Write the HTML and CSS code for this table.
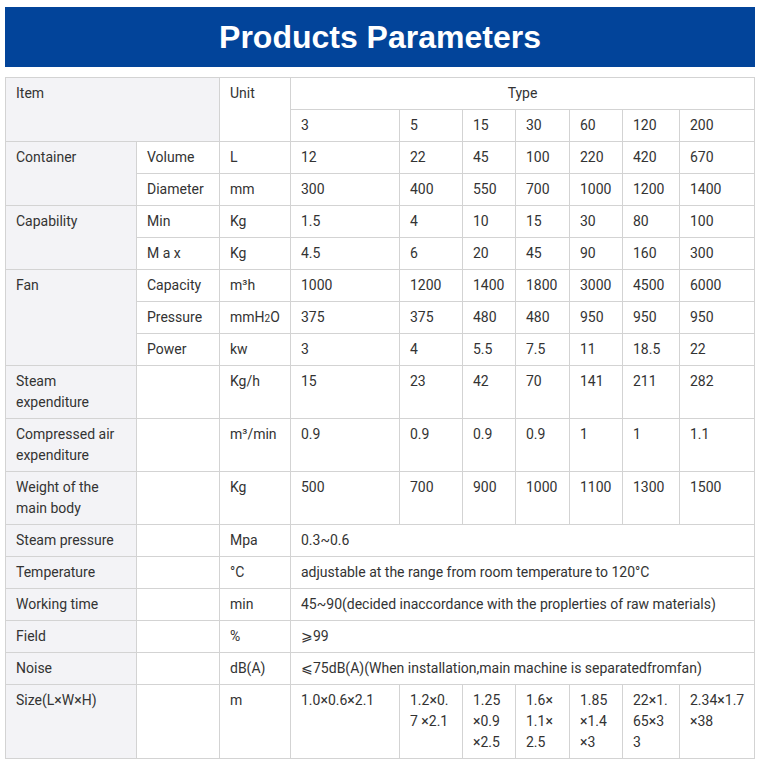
FILE: index.html
```html
<!DOCTYPE html>
<html lang="en">
<head>
<meta charset="utf-8">
<title>Products Parameters</title>
<link rel="stylesheet" href="styles.css">
</head>
<body>
<div class="page">
  <h1 class="banner">Products Parameters</h1>
  <table class="params">
    <colgroup>
      <col class="c1"><col class="c2"><col class="c3"><col class="c4"><col class="c5"><col class="c6"><col class="c7"><col class="c8"><col class="c9"><col class="c10">
    </colgroup>
    <tbody>
      <tr><td class="head" colspan="2" rowspan="2">Item</td><td rowspan="2">Unit</td><td colspan="7" class="center">Type</td></tr>
      <tr><td>3</td><td>5</td><td>15</td><td>30</td><td>60</td><td>120</td><td>200</td></tr>
      <tr><td class="head" rowspan="2">Container</td><td>Volume</td><td>L</td><td>12</td><td>22</td><td>45</td><td>100</td><td>220</td><td>420</td><td>670</td></tr>
      <tr><td>Diameter</td><td>mm</td><td>300</td><td>400</td><td>550</td><td>700</td><td>1000</td><td>1200</td><td>1400</td></tr>
      <tr><td class="head" rowspan="2">Capability</td><td>Min</td><td>Kg</td><td>1.5</td><td>4</td><td>10</td><td>15</td><td>30</td><td>80</td><td>100</td></tr>
      <tr><td>M a x</td><td>Kg</td><td>4.5</td><td>6</td><td>20</td><td>45</td><td>90</td><td>160</td><td>300</td></tr>
      <tr><td class="head" rowspan="3">Fan</td><td>Capacity</td><td>m³h</td><td>1000</td><td>1200</td><td>1400</td><td>1800</td><td>3000</td><td>4500</td><td>6000</td></tr>
      <tr><td>Pressure</td><td>mmH<span class="sub">2</span>O</td><td>375</td><td>375</td><td>480</td><td>480</td><td>950</td><td>950</td><td>950</td></tr>
      <tr><td>Power</td><td>kw</td><td>3</td><td>4</td><td>5.5</td><td>7.5</td><td>11</td><td>18.5</td><td>22</td></tr>
      <tr><td class="head">Steam expenditure</td><td></td><td>Kg/h</td><td>15</td><td>23</td><td>42</td><td>70</td><td>141</td><td>211</td><td>282</td></tr>
      <tr><td class="head">Compressed air expenditure</td><td></td><td>m³/min</td><td>0.9</td><td>0.9</td><td>0.9</td><td>0.9</td><td>1</td><td>1</td><td>1.1</td></tr>
      <tr><td class="head">Weight of the main body</td><td></td><td>Kg</td><td>500</td><td>700</td><td>900</td><td>1000</td><td>1100</td><td>1300</td><td>1500</td></tr>
      <tr><td class="head">Steam pressure</td><td></td><td>Mpa</td><td colspan="7">0.3~0.6</td></tr>
      <tr><td class="head">Temperature</td><td></td><td>°C</td><td colspan="7">adjustable at the range from room temperature to 120°C</td></tr>
      <tr><td class="head">Working time</td><td></td><td>min</td><td colspan="7">45~90(decided inaccordance with the proplerties of raw materials)</td></tr>
      <tr><td class="head">Field</td><td></td><td>%</td><td colspan="7">⩾99</td></tr>
      <tr><td class="head">Noise</td><td></td><td>dB(A)</td><td colspan="7">⩽75dB(A)(When installation,main machine is separatedfromfan)</td></tr>
      <tr class="size"><td class="head">Size(L×W×H)</td><td></td><td>m</td><td>1.0×0.6×2.1</td><td>1.2×0.7 ×2.1</td><td>1.25×0.9×2.5</td><td>1.6×1.1×2.5</td><td>1.85×1.4×3</td><td>22×1.65×33</td><td class="tight">2.34×1.7×38</td></tr>
    </tbody>
  </table>
</div>
</body>
</html>
```

FILE: styles.css
```css
html, body {
  margin: 0;
  padding: 0;
  background: #ffffff;
}

.page {
  padding: 7px 5px 0 5px;
  width: 750px;
}

.banner {
  margin: 0 0 10px 0;
  height: 60px;
  background: #02449a;
  color: #ffffff;
  font-family: "Liberation Sans", Arial, sans-serif;
  font-weight: bold;
  font-size: 32px;
  line-height: 60px;
  text-align: center;
}

.params {
  width: 750px;
  border-collapse: collapse;
  table-layout: fixed;
  font-family: Roboto, "Noto Sans", sans-serif;
  font-size: 14px;
  line-height: 21px;
  color: #333333;
}

.params td {
  border: 1px solid #d3d3d3;
  padding: 5px 10px;
  vertical-align: top;
  text-align: left;
}

.params td.head {
  background: #f3f3f6;
}

.params td.center {
  text-align: center;
}

.params .size td {
  word-break: break-all;
}

.params .size td.tight {
  padding-right: 4px;
}

.sub {
  font-size: 10px;
  line-height: 1;
  vertical-align: 0;
}

.c1 { width: 131px; }
.c2 { width: 83px; }
.c3 { width: 71px; }
.c4 { width: 109px; }
.c5 { width: 63px; }
.c6 { width: 53px; }
.c7 { width: 54px; }
.c8 { width: 53px; }
.c9 { width: 57px; }
.c10 { width: 75px; }
```
